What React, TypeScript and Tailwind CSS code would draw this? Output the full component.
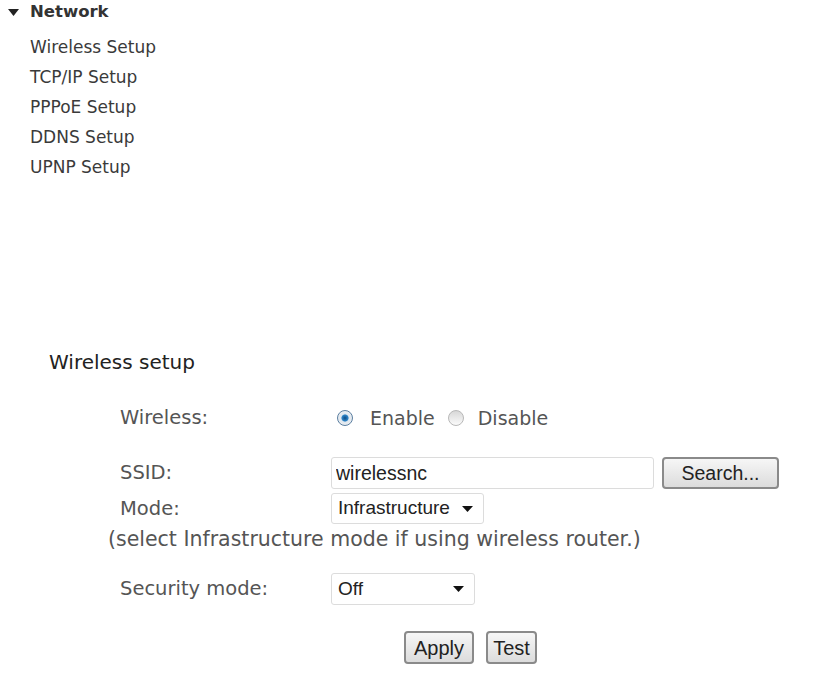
export default function App() {
  const links = ["Wireless Setup", "TCP/IP Setup", "PPPoE Setup", "DDNS Setup", "UPNP Setup"];

  return (
    <div className="w-[837px] h-[699px] bg-white text-[#444] font-['DejaVu_Sans',sans-serif] overflow-hidden">
      {/* Sidebar menu */}
      <div className="pt-[2px]">
        <div className="flex items-center h-[20px]">
          <svg width="11" height="7" viewBox="0 0 11 7" className="ml-[8px] mr-[11px]">
            <path d="M0 0 L11 0 L5.5 7 Z" fill="#222" />
          </svg>
          <span className="text-[16.5px] font-bold text-[#333]">Network</span>
        </div>
        <div className="mt-[11px] pl-[30px] flex flex-col">
          {links.map((l) => (
            <a key={l} href="#" className="h-[30px] flex items-center text-[17px] text-[#3a3a3a]">
              {l}
            </a>
          ))}
        </div>
      </div>

      {/* Wireless setup form */}
      <div className="mt-[167px] pl-[49px]">
        <div className="text-[20px] text-[#222] h-[24px] leading-[24px]">Wireless setup</div>

        <div className="pl-[71px] mt-[32px] text-[19.5px] text-[#555]">
          <div className="flex items-center h-[24px]">
            <span className="w-[217px]">Wireless:</span>
            <label className="flex items-center">
              <span className="w-[16px] h-[16px] rounded-full border border-[#5a7ea0] bg-[radial-gradient(circle,#0b4a85_0%,#2f86c8_32%,#dfe7ef_40%,#f3f3f3_100%)]" />
              <span className="ml-[17px] text-[19px]">Enable</span>
            </label>
            <label className="flex items-center ml-[13px]">
              <span className="w-[16px] h-[16px] rounded-full border border-[#b8b8b8] bg-[linear-gradient(#d8d8d8,#fbfbfb)]" />
              <span className="ml-[14px] text-[19px]">Disable</span>
            </label>
          </div>

          <div className="flex items-center mt-[27px]">
            <span className="w-[211px]">SSID:</span>
            <input
              defaultValue="wirelessnc"
              className="w-[323px] h-[32px] border border-[#dcdcdc] rounded-[3px] px-[4px] text-[19.5px] text-[#222] font-['Liberation_Sans',sans-serif] outline-none"
            />
            <button className="ml-[8px] w-[117px] h-[32px] border-2 border-[#8a8a8a] rounded-[4px] bg-[linear-gradient(#f6f6f6,#dcdcdc)] text-[19.5px] text-[#222] font-['Liberation_Sans',sans-serif] pb-[2px]">
              Search...
            </button>
          </div>

          <div className="flex items-center mt-[4px]">
            <span className="w-[211px]">Mode:</span>
            <div className="w-[153px] h-[31px] border border-[#dcdcdc] rounded-[3px] flex items-center justify-between pl-[6px] pr-[10px] text-[19px] text-[#222] font-['Liberation_Sans',sans-serif]">
              <span>Infrastructure</span>
              <svg width="11" height="6" viewBox="0 0 11 6">
                <path d="M0 0 L11 0 L5.5 6 Z" fill="#111" />
              </svg>
            </div>
          </div>

          <div className="-ml-[12px] h-[24px] leading-[24px] mt-[3px] text-[20.5px]">
            (select Infrastructure mode if using wireless router.)
          </div>

          <div className="flex items-center mt-[22px]">
            <span className="w-[211px]">Security mode:</span>
            <div className="w-[144px] h-[32px] border border-[#dcdcdc] rounded-[3px] flex items-center justify-between pl-[6px] pr-[10px] text-[19px] text-[#222] font-['Liberation_Sans',sans-serif]">
              <span>Off</span>
              <svg width="11" height="6" viewBox="0 0 11 6">
                <path d="M0 0 L11 0 L5.5 6 Z" fill="#111" />
              </svg>
            </div>
          </div>

          <div className="flex mt-[26px] ml-[284px] gap-[12px] font-['Liberation_Sans',sans-serif] text-[20px] text-[#222]">
            <button className="w-[70px] h-[33px] border-2 border-[#8a8a8a] rounded-[4px] bg-[linear-gradient(#f6f6f6,#dcdcdc)] pb-[2px]">
              Apply
            </button>
            <button className="w-[51px] h-[33px] border-2 border-[#8a8a8a] rounded-[4px] bg-[linear-gradient(#f6f6f6,#dcdcdc)] pb-[2px]">
              Test
            </button>
          </div>
        </div>
      </div>
    </div>
  );
}
